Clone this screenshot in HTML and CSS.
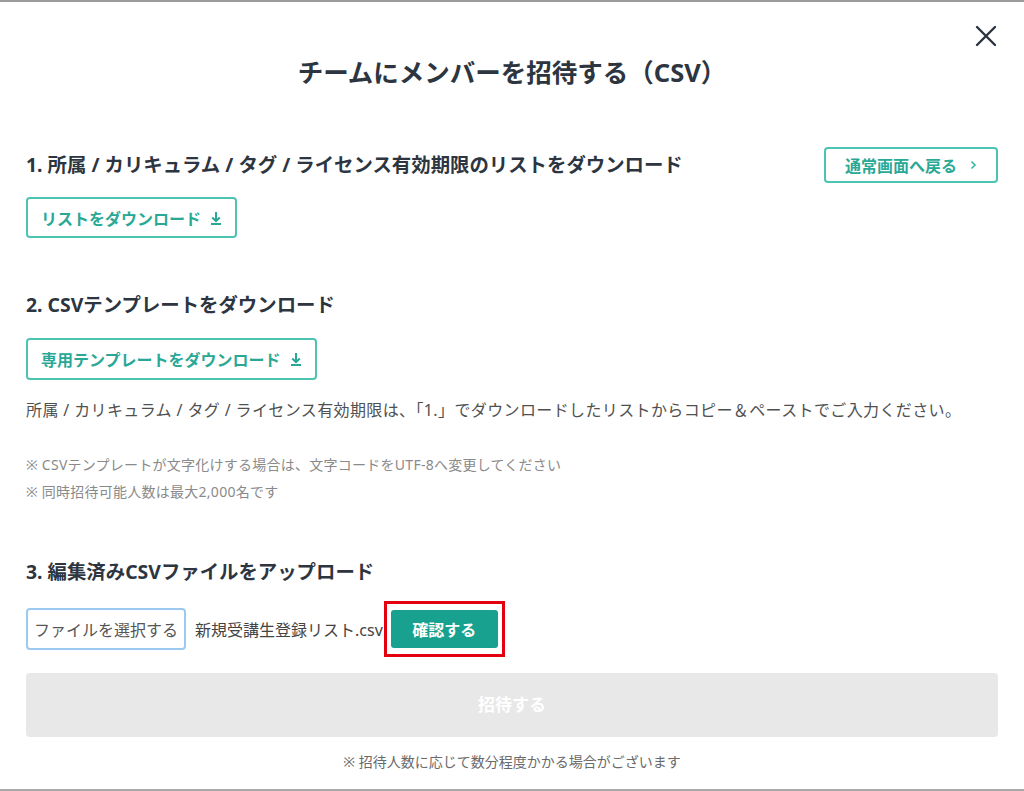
FILE: index.html
```html
<!DOCTYPE html>
<html lang="ja">
<head>
    <meta charset="utf-8">
    <link rel="stylesheet" href="styles.css">
</head>
<body>
<div class="modal">
    <button class="close" aria-label="閉じる">
        <svg width="22" height="22" viewBox="0 0 22 22"><path d="M2 2 L20 20 M20 2 L2 20" stroke="#2b3340" stroke-width="2.4" stroke-linecap="round" fill="none"/></svg>
    </button>
    <h1 class="title">チームにメンバーを招待する（CSV）</h1>

    <div class="row-head">
        <h2 class="step">1. 所属 / カリキュラム / タグ / ライセンス有効期限のリストをダウンロード</h2>
        <a class="btn-outline back">通常画面へ戻る
            <svg width="7" height="10" viewBox="0 0 7 10"><path d="M1.5 1.5 L5 5 L1.5 8.5" stroke="#3bb5a3" stroke-width="1.6" fill="none"/></svg>
        </a>
    </div>
    <a class="btn-outline dl dl1">リストをダウンロード
        <svg width="12" height="14" viewBox="0 0 12 14"><path d="M6 1 V10 M2.2 6.4 L6 10 L9.8 6.4 M1 13 H11" stroke="#2aa896" stroke-width="2" fill="none"/></svg>
    </a>

    <h2 class="step step2">2. CSVテンプレートをダウンロード</h2>
    <a class="btn-outline dl dl2">専用テンプレートをダウンロード
        <svg width="12" height="14" viewBox="0 0 12 14"><path d="M6 1 V10 M2.2 6.4 L6 10 L9.8 6.4 M1 13 H11" stroke="#2aa896" stroke-width="2" fill="none"/></svg>
    </a>
    <p class="desc">所属 / カリキュラム / タグ / ライセンス有効期限は、「1.」でダウンロードしたリストからコピー＆ペーストでご入力ください。</p>
    <p class="note note1">※ CSVテンプレートが文字化けする場合は、文字コードをUTF-8へ変更してください</p>
    <p class="note note2">※ 同時招待可能人数は最大2,000名です</p>

    <h2 class="step step3">3. 編集済みCSVファイルをアップロード</h2>
    <div class="upload">
        <button class="file-btn">ファイルを選択する</button>
        <span class="file-name">新規受講生登録リスト.csv</span>
        <span class="mark"><button class="confirm">確認する</button></span>
    </div>

    <button class="invite" disabled>招待する</button>
    <p class="foot">※ 招待人数に応じて数分程度かかる場合がございます</p>
</div>
</body>
</html>
```

FILE: styles.css
```css
body {
    margin: 0;
    background: #fff;
    font-family: "Noto Sans", "Noto Sans CJK JP", sans-serif;
    color: #2d3540;
}
.modal {
    position: relative;
    box-sizing: border-box;
    height: 791px;
    padding: 0 26px;
    border-top: 2px solid #9c9c9c;
    border-bottom: 2px solid #a8a8a8;
}
.close {
    position: absolute;
    top: 23px;
    right: 27px;
    padding: 0;
    border: 0;
    background: none;
    line-height: 0;
}
.title {
    margin: 54px 0 0;
    font-size: 25.5px;
    line-height: 32px;
    font-weight: 700;
    text-align: center;
}
.step {
    margin: 0;
    font-size: 19.4px;
    line-height: 28px;
    font-weight: 700;
}
.row-head {
    display: flex;
    align-items: center;
    justify-content: space-between;
    margin-top: 59px;
}
.btn-outline {
    display: flex;
    align-items: center;
    box-sizing: border-box;
    border: 2px solid #4cc3b3;
    border-radius: 4px;
    color: #2aa896;
    font-weight: 700;
    font-size: 16px;
    text-decoration: none;
}
.back {
    width: 174px;
    height: 36px;
    padding-left: 19px;
    gap: 13px;
}
.dl {
    width: max-content;
    height: 41px;
    padding: 0 13px 0 13px;
    gap: 9px;
}
.dl1 { margin-top: 14px; }
.dl2 { margin-top: 19px; height: 42px; }
.step2 { margin-top: 53px; }
.desc {
    margin: 18px 0 0;
    font-size: 16px;
    line-height: 24px;
    letter-spacing: 0.38px;
    color: #505050;
}
.note {
    margin: 0;
    font-size: 14px;
    line-height: 20px;
    letter-spacing: 0.25px;
    color: #8a8a8a;
}
.note1 { margin-top: 33px; }
.note2 { margin-top: 7px; }
.step3 { margin-top: 56px; }
.upload {
    display: flex;
    align-items: center;
    margin-top: 15px;
    font-size: 16px;
}
.file-btn {
    box-sizing: border-box;
    width: 160px;
    height: 42px;
    border: 2px solid #9cc9f0;
    border-radius: 4px;
    background: #fff;
    font-family: inherit;
    font-size: 16px;
    color: #555;
    padding: 0;
}
.file-name {
    margin-left: 9px;
    color: #444;
}
.mark {
    display: flex;
    margin-left: 1px;
    padding: 6px 4px;
    border: 3px solid #e3000f;
}
.confirm {
    width: 107px;
    height: 38px;
    border: 0;
    border-radius: 3px;
    background: #17a18e;
    color: #fff;
    font-family: inherit;
    font-weight: 700;
    font-size: 16px;
}
.invite {
    display: block;
    width: 100%;
    height: 64px;
    margin-top: 16px;
    padding-bottom: 4px;
    border: 0;
    border-radius: 4px;
    background: #e8e8e8;
    color: #fff;
    font-family: inherit;
    font-weight: 700;
    font-size: 17px;
}
.foot {
    margin: 15px 0 0;
    text-align: center;
    font-size: 14px;
    line-height: 20px;
    color: #6a6a6a;
}
```
